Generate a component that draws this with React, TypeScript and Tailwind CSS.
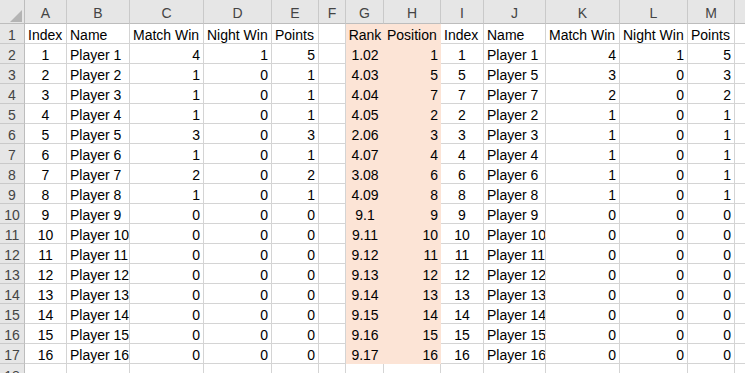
import React from "react";

const cols = ["A", "B", "C", "D", "E", "F", "G", "H", "I", "J", "K", "L", "M", ""];
const widths = [42, 63, 74, 68, 47, 27, 38, 57, 43, 62, 74, 68, 47, 20];
// alignment per column for data rows
const align = ["center", "left", "right", "right", "right", "left", "center", "right", "center", "left", "right", "right", "right", "left"];

const headers = ["Index", "Name", "Match Win", "Night Win", "Points", "", "Rank", "Position", "Index", "Name", "Match Win", "Night Win", "Points", ""];

const sorted = [
  [1, 4, 1, 5],
  [5, 3, 0, 3],
  [7, 2, 0, 2],
  [2, 1, 0, 1],
  [3, 1, 0, 1],
  [4, 1, 0, 1],
  [6, 1, 0, 1],
  [8, 1, 0, 1],
];
const match = [4, 1, 1, 1, 3, 1, 2, 1];
const night = [1, 0, 0, 0, 0, 0, 0, 0];
const ranks = ["1.02", "4.03", "4.04", "4.05", "2.06", "4.07", "3.08", "4.09"];
const positions = [1, 5, 7, 2, 3, 4, 6, 8];

function buildRows(): string[][] {
  const rows: string[][] = [];
  for (let i = 0; i < 16; i++) {
    const idx = i + 1;
    const m = i < 8 ? match[i] : 0;
    const n = i < 8 ? night[i] : 0;
    const rank = i < 8 ? ranks[i] : i === 8 ? "9.1" : "9.1" + (i - 8);
    const pos = i < 8 ? positions[i] : idx;
    const s = i < 8 ? sorted[i] : [idx, 0, 0, 0];
    rows.push([
      String(idx),
      "Player " + idx,
      String(m),
      String(n),
      String(m + n),
      "",
      rank,
      String(pos),
      String(s[0]),
      "Player " + s[0],
      String(s[1]),
      String(s[2]),
      String(s[3]),
      "",
    ]);
  }
  return rows;
}

const alignClass = (a: string) =>
  a === "center" ? "justify-center" : a === "right" ? "justify-end" : "justify-start";

const App: React.FC = () => {
  const rows = buildRows();
  const shaded = (c: number) => c === 6 || c === 7;

  return (
    <div
      className="w-[745px] h-[373px] overflow-hidden bg-white text-[14px] text-black leading-none"
      style={{ fontFamily: '"Liberation Sans", Arial, sans-serif' }}
    >
      {/* column letters */}
      <div className="flex h-[24px]">
        <div className="w-[25px] shrink-0 h-full bg-[#e6e6e6] border-r border-b border-[#bdbdbd] relative">
          <svg className="absolute left-[10px] top-[10px]" width="12" height="12" viewBox="0 0 12 12">
            <polygon points="12,0 12,12 0,12" fill="#b4b4b4" />
          </svg>
        </div>
        {cols.map((c, i) => (
          <div
            key={i}
            style={{ width: widths[i] }}
            className="shrink-0 h-full bg-[#e6e6e6] border-r border-b border-r-[#c9c9c9] border-b-[#bdbdbd] flex items-center justify-center pt-[2px] text-[#444]"
          >
            {c}
          </div>
        ))}
      </div>

      {/* row 1 headers */}
      <div className="flex h-[20px]">
        <div className="w-[25px] shrink-0 h-full bg-[#e6e6e6] border-r border-b border-r-[#bdbdbd] border-b-[#c9c9c9] flex items-center justify-center pt-[2px] text-[#444]">
          1
        </div>
        {headers.map((h, i) => (
          <div
            key={i}
            style={{ width: widths[i] }}
            className={`shrink-0 h-full border-b flex items-center px-[3px] pt-[2px] whitespace-nowrap overflow-hidden ${
              shaded(i) ? "bg-[#fce4d6] border-b-[#fce4d6]" : "border-r border-[#d4d4d4]"
            } ${i === 6 ? "justify-center" : "justify-start"}`}
          >
            {h}
          </div>
        ))}
      </div>

      {rows.map((r, ri) => (
        <div key={ri} className="flex h-[20px]">
          <div className="w-[25px] shrink-0 h-full bg-[#e6e6e6] border-r border-b border-r-[#bdbdbd] border-b-[#c9c9c9] flex items-center justify-center pt-[2px] text-[#444]">
            {ri + 2}
          </div>
          {r.map((v, i) => (
            <div
              key={i}
              style={{ width: widths[i] }}
              className={`shrink-0 h-full border-b flex items-center px-[3px] pt-[2px] whitespace-nowrap overflow-hidden ${alignClass(
                align[i]
              )} ${shaded(i) ? "bg-[#fce4d6] border-b-[#fce4d6]" : "border-r border-[#d4d4d4]"}`}
            >
              {v}
            </div>
          ))}
        </div>
      ))}

      <div className="flex h-[20px]">
        <div className="w-[25px] shrink-0 h-full bg-[#e6e6e6] border-r border-r-[#bdbdbd] flex items-start justify-center pt-[5px] text-[#444]">
          18
        </div>
        {widths.map((w, i) => (
          <div key={i} style={{ width: w }} className="shrink-0 h-full border-r border-[#d4d4d4]" />
        ))}
      </div>
    </div>
  );
};

export default App;
